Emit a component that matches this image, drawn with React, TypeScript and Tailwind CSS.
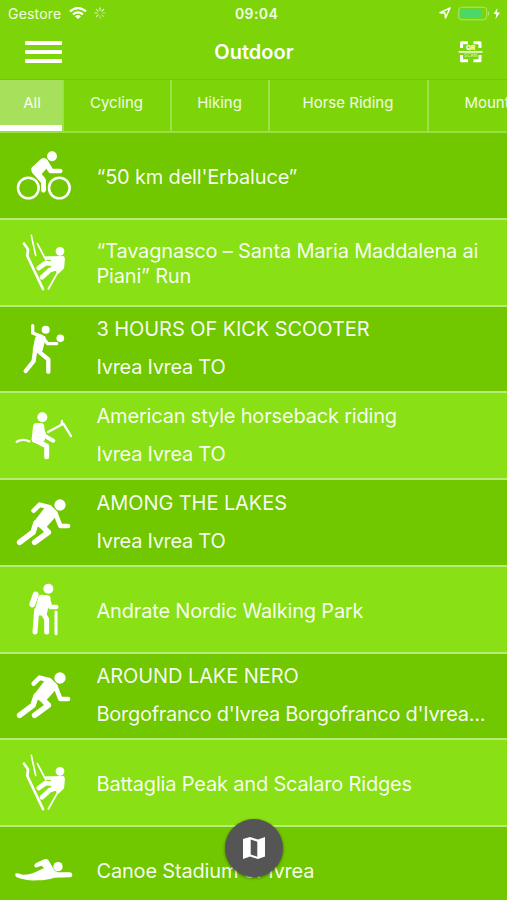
import { ReactNode } from "react";

const Cyclist = () => (
  <g transform="translate(0 5)">
    <g fill="none" stroke="white" strokeWidth="7.5">
      <circle cx="85" cy="160" r="31" />
      <circle cx="178" cy="160" r="31" />
    </g>
    <circle cx="156" cy="65" r="15" fill="white" />
    <path d="M94 105Q93 101 96 98L123 73Q133 66 142 75L158 102H181Q188 103 188 109Q187 116 180 116H152Q148 116 145 111L139 102L125 118L135 130Q138 134 138 139V167Q137 174 130 174Q123 173 123 166V144L97 115Q94 111 94 105Z" fill="white" />
  </g>
);

const Climber = () => (
  <g fill="none" stroke="white" strokeLinecap="round" strokeLinejoin="round">
    <path d="M72 71L84 88L82 108L129 207" strokeWidth="8" />
    <path d="M94 46L107 106M112 71L138 120M176 152L145 207" strokeWidth="5" />
    <path d="M139 114H180M189 118L187 142L174 155" strokeWidth="11" />
    <path d="M172 133L137 129L116 144M168 145L150 150L126 172" strokeWidth="14" />
    <path d="M158 117L188 114L184 136L160 144Z" fill="white" strokeWidth="12" />
    <circle cx="180" cy="94" r="13" fill="white" stroke="none" />
  </g>
);

const BallPlayer = () => (
  <g fill="none" stroke="white" strokeLinecap="round" strokeLinejoin="round">
    <path d="M98 59V81L126 92L143 113H170" strokeWidth="10" />
    <path d="M112 97L130 96L121 132L105 132Z" fill="white" strokeWidth="14" />
    <path d="M106 128L101 165L77 195M112 133L145 160V197" strokeWidth="13" />
    <circle cx="137" cy="71" r="12" fill="white" stroke="none" />
    <circle cx="181" cy="97" r="11.5" fill="white" stroke="none" />
  </g>
);

const Rider = () => (
  <g fill="none" stroke="white" strokeLinecap="round" strokeLinejoin="round">
    <path d="M50 146Q68 136 88 145" strokeWidth="7" />
    <path d="M144 117L190 92L213 129M185 92L186 84" strokeWidth="7" />
    <path d="M110 101L122 101L124 136L106 138Z" fill="white" strokeWidth="22" />
    <path d="M127 112L136 130L160 143" strokeWidth="12" />
    <path d="M103 140L140 159V191" strokeWidth="15" />
    <circle cx="127" cy="73" r="15" fill="white" stroke="none" />
  </g>
);

const Runner = () => (
  <g fill="none" stroke="white" strokeLinecap="round" strokeLinejoin="round">
    <path d="M101 92L119 74L149 82L166 99L181 138H204" strokeWidth="14" />
    <path d="M141 88L164 101L132 137L109 130Z" fill="white" strokeWidth="17" />
    <path d="M108 129L99 157L59 187M120 132L145 157L104 187" strokeWidth="17" />
    <circle cx="180" cy="75" r="17" fill="white" stroke="none" />
  </g>
);

const Hiker = () => (
  <g fill="none" stroke="white" strokeLinecap="round" strokeLinejoin="round">
    <path d="M107 83L97 112" strokeWidth="18" />
    <path d="M124 93L142 94L132 136L113 136Z" fill="white" strokeWidth="19" />
    <path d="M110 129L105 195M126 132L140 157V195" strokeWidth="15" />
    <path d="M144 96L151 120H169" strokeWidth="13" />
    <path d="M168 135V200" strokeWidth="9" />
    <circle cx="145" cy="65" r="15" fill="white" stroke="none" />
  </g>
);

const Swimmer = () => (
  <g transform="translate(0 -35)">
    <path d="M47 174Q55 174 68 178Q90 179 115 166L132 158L124 151L112 156Q105 158 103 153Q101 148 108 143L133 132Q140 129 145 134L164 166L174 171H210Q217 172 217 179Q217 184 211 186L163 187Q145 194 112 195Q76 197 49 185Q43 180 47 174Z" fill="white" />
    <circle cx="174" cy="154" r="14" fill="white" />
  </g>
);

type Activity = { icon: ReactNode; title: string; place?: string; caps?: boolean };

const activities: Activity[] = [
  { icon: <Cyclist />, title: "“50 km dell'Erbaluce”" },
  { icon: <Climber />, title: "“Tavagnasco – Santa Maria Maddalena ai Piani” Run" },
  { icon: <BallPlayer />, title: "3 HOURS OF KICK SCOOTER", place: "Ivrea Ivrea TO", caps: true },
  { icon: <Rider />, title: "American style horseback riding", place: "Ivrea Ivrea TO" },
  { icon: <Runner />, title: "AMONG THE LAKES", place: "Ivrea Ivrea TO", caps: true },
  { icon: <Hiker />, title: "Andrate Nordic Walking Park" },
  { icon: <Runner />, title: "AROUND LAKE NERO", place: "Borgofranco d'Ivrea Borgofranco d'Ivrea...", caps: true },
  { icon: <Climber />, title: "Battaglia Peak and Scalaro Ridges" },
  { icon: <Swimmer />, title: "Canoe Stadium of Ivrea" },
];

const tabs = [
  { label: "Cycling", width: "w-[108px]" },
  { label: "Hiking", width: "w-[98px]" },
  { label: "Horse Riding", width: "w-[159px]" },
  { label: "Mountain", width: "w-[140px]" },
];

const StatusBar = () => (
  <div className="grid h-7 grid-cols-3 items-center pb-0.5 text-[14px] text-white/90">
    <div className="flex items-center pl-2">
      <span className="w-[55px] whitespace-nowrap tracking-[0.2px]">Gestore</span>
      <svg className="ml-1.5 h-3 w-[18px]" viewBox="0 0 18 12" fill="none" stroke="white" strokeWidth="2.2">
        <path d="M1 4.3Q9-2.3 17 4.3M4 7.3Q9 3.3 14 7.3" />
        <path d="M6 9.2Q9 7 12 9.2L9 12Z" fill="white" stroke="none" />
      </svg>
      <svg className="ml-[7px] h-3 w-3" viewBox="0 0 12 12" stroke="white" strokeWidth="1.1" strokeLinecap="round">
        <path d="M6 .7V3.3M9.7 2.3L7.9 4.1" opacity=".9" />
        <path d="M11.3 6H8.7M9.7 9.7L7.9 7.9M6 11.3V8.7" opacity=".45" />
        <path d="M2.3 9.7L4.1 7.9M.7 6H3.3M2.3 2.3L4.1 4.1" opacity=".75" />
      </svg>
    </div>
    <span className="pl-1.5 text-center font-semibold tracking-[0.4px]">09:04</span>
    <div className="flex items-center justify-end pr-1.5">
      <svg className="h-3 w-3" viewBox="0 0 12 12" fill="none" stroke="white" strokeWidth="1.5" strokeLinejoin="round">
        <path d="M1 5.7L11 1L6.5 11L6 6Z" />
      </svg>
      <svg className="ml-[7px] h-[15px] w-[43px]" viewBox="0 0 43 15">
        <rect x=".7" y="1.2" width="28" height="12.6" rx="3" fill="none" stroke="#afe66f" />
        <rect x="2.3" y="2.8" width="21.5" height="9.4" rx="1" fill="#4bd86a" />
        <path d="M30 5Q32.5 7.5 30 10" fill="#afe66f" />
        <path d="M39.5 2L35.5 8H38.4L37.5 13L42 6.5H38.9Z" fill="white" />
      </svg>
    </div>
  </div>
);

const QrIcon = () => (
  <svg className="h-[22px] w-[25px]" viewBox="0 0 25 22">
    <path d="M10 1.7H3.5V7M15.5 1.7H22V7M10 19.7H3.5V14M15.5 19.7H22V14" fill="none" stroke="white" strokeWidth="3" strokeLinejoin="round" />
    <path d="M.5 10.9H24.5" stroke="white" strokeWidth="1.5" />
    <text x="12.7" y="9.2" textAnchor="middle" fontSize="6.5" fontWeight="800" fill="white">QR</text>
    <text x="12.7" y="15.8" textAnchor="middle" fontSize="4.6" fontWeight="600" fill="white" fillOpacity=".6">SCAN</text>
  </svg>
);

const App = () => {
  return (
    <div className="relative h-[900px] w-[507px] overflow-hidden bg-[#7dd409] font-['Inter','Liberation_Sans',sans-serif] text-white">
      <StatusBar />
      <header className="grid h-[51px] grid-cols-3 items-center pb-[3px]">
        <button className="ml-[25px] flex w-[37px] flex-col gap-[5px]">
          <span className="h-1 w-full rounded-[1px] bg-white" />
          <span className="h-1 w-full rounded-[1px] bg-white" />
          <span className="h-1 w-full rounded-[1px] bg-white" />
        </button>
        <h1 className="pl-px text-center text-[20px] font-semibold">Outdoor</h1>
        <button className="mr-[24px] justify-self-end">
          <QrIcon />
        </button>
      </header>
      <nav className="flex h-[54px] border-t border-b-2 border-t-[#74c508] border-b-[#99df45] text-[15px] text-white/90">
        <button className="flex w-[64px] shrink-0 flex-col border-r-2 border-[#9be14a] bg-[#a7e15b]">
          <span className="flex w-full flex-1 items-center justify-center pl-0.5 pt-0.5">All</span>
          <span className="h-[6px] w-full bg-white" />
        </button>
        {tabs.map((tab) => (
          <button key={tab.label} className={`${tab.width} shrink-0 border-r-2 border-[#9be14a] pr-px pb-1`}>
            {tab.label}
          </button>
        ))}
      </nav>
      <ul>
        {activities.map((item) => (
          <li key={item.title} className="flex h-[86.75px] items-center border-b-2 border-[#b9eb78] odd:bg-[#71c700] even:bg-[#89e014]">
            <svg className="h-[85px] w-[90px] shrink-0" viewBox="0 0 270 255">{item.icon}</svg>
            <div className={`w-[400px] pl-[6.5px] text-[20px] text-white/95 ${item.place ? "pb-px leading-6" : "pt-1 leading-[25px]"}`}>
              <p className={item.caps ? "tracking-[-0.08px]" : "tracking-[-0.18px]"}>{item.title}</p>
              {item.place && <p className="mt-3.5 whitespace-nowrap tracking-[-0.28px]">{item.place}</p>}
            </div>
          </li>
        ))}
      </ul>
      <button className="absolute top-[819px] left-[225px] flex h-[58px] w-[58px] items-center justify-center rounded-full bg-[#555] shadow-[0_1px_3px_rgba(0,0,0,0.5)]">
        <svg className="h-6 w-6" viewBox="0 0 24 24">
          <path d="M1 3L8 1L16 3.5L23 1V20.5L16 23L8 20.5L1 23ZM8.7 3.5V18.5L15.3 20.7V5.7Z" fill="white" fillRule="evenodd" />
        </svg>
      </button>
    </div>
  );
};

export default App;
